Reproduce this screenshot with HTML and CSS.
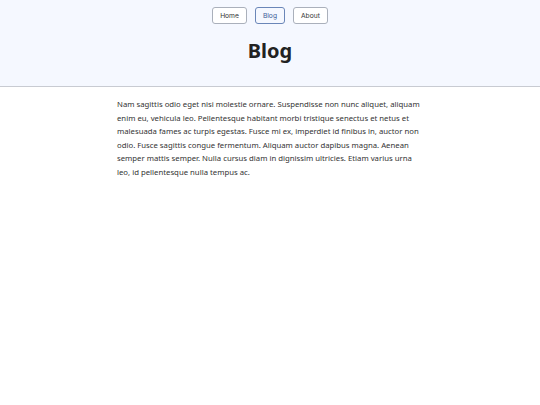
FILE: index.html
```
<!DOCTYPE html>
<html>
<head>
<meta charset="utf-8">
<link rel="stylesheet" href="styles.css">
</head>
<body>
<header class="site-header">
  <nav class="nav">
    <a class="nav-btn" href="#">Home</a>
    <a class="nav-btn active" href="#">Blog</a>
    <a class="nav-btn" href="#">About</a>
  </nav>
  <h1 class="title">Blog</h1>
</header>
<main class="content">
  <p>Nam sagittis odio eget nisi molestie ornare. Suspendisse non nunc aliquet, aliquam enim eu, vehicula leo. Pellentesque habitant morbi tristique senectus et netus et malesuada fames ac turpis egestas. Fusce mi ex, imperdiet id finibus in, auctor non odio. Fusce sagittis congue fermentum. Aliquam auctor dapibus magna. Aenean semper mattis semper. Nulla cursus diam in dignissim ultricies. Etiam varius urna leo, id pellentesque nulla tempus ac.</p>
</main>
</body>
</html>
```
FILE: styles.css
```
html, body {
  margin: 0;
  padding: 0;
  background: #ffffff;
}
body {
  font-family: "Noto Sans", sans-serif;
  color: #222;
}
.site-header {
  background: #f5f8ff;
  border-bottom: 1px solid #c8cbd2;
  height: 87px;
  box-sizing: border-box;
  padding-top: 7px;
  display: flex;
  flex-direction: column;
  align-items: center;
}
.nav {
  display: flex;
  gap: 8px;
}
.nav-btn {
  font-family: "Inter", sans-serif;
  font-size: 6.7px;
  color: #333;
  text-decoration: none;
  border: 1px solid #aab0bb;
  border-radius: 3px;
  background: #fff;
  height: 17px;
  box-sizing: border-box;
  padding: 0 7px;
  display: flex;
  align-items: center;
}
.nav-btn.active {
  border-color: #6a86b8;
  color: #3e5f99;
  background: #f5f8ff;
}
.title {
  margin: 12.5px 0 0 0;
  font-size: 20px;
  font-weight: 700;
  line-height: 28px;
  color: #222;
}
.content {
  width: 306px;
  margin: 0 auto;
  padding-top: 11px;
}
.content p {
  margin: 0;
  font-size: 7.75px;
  line-height: 13.6px;
  color: #333;
}
```
